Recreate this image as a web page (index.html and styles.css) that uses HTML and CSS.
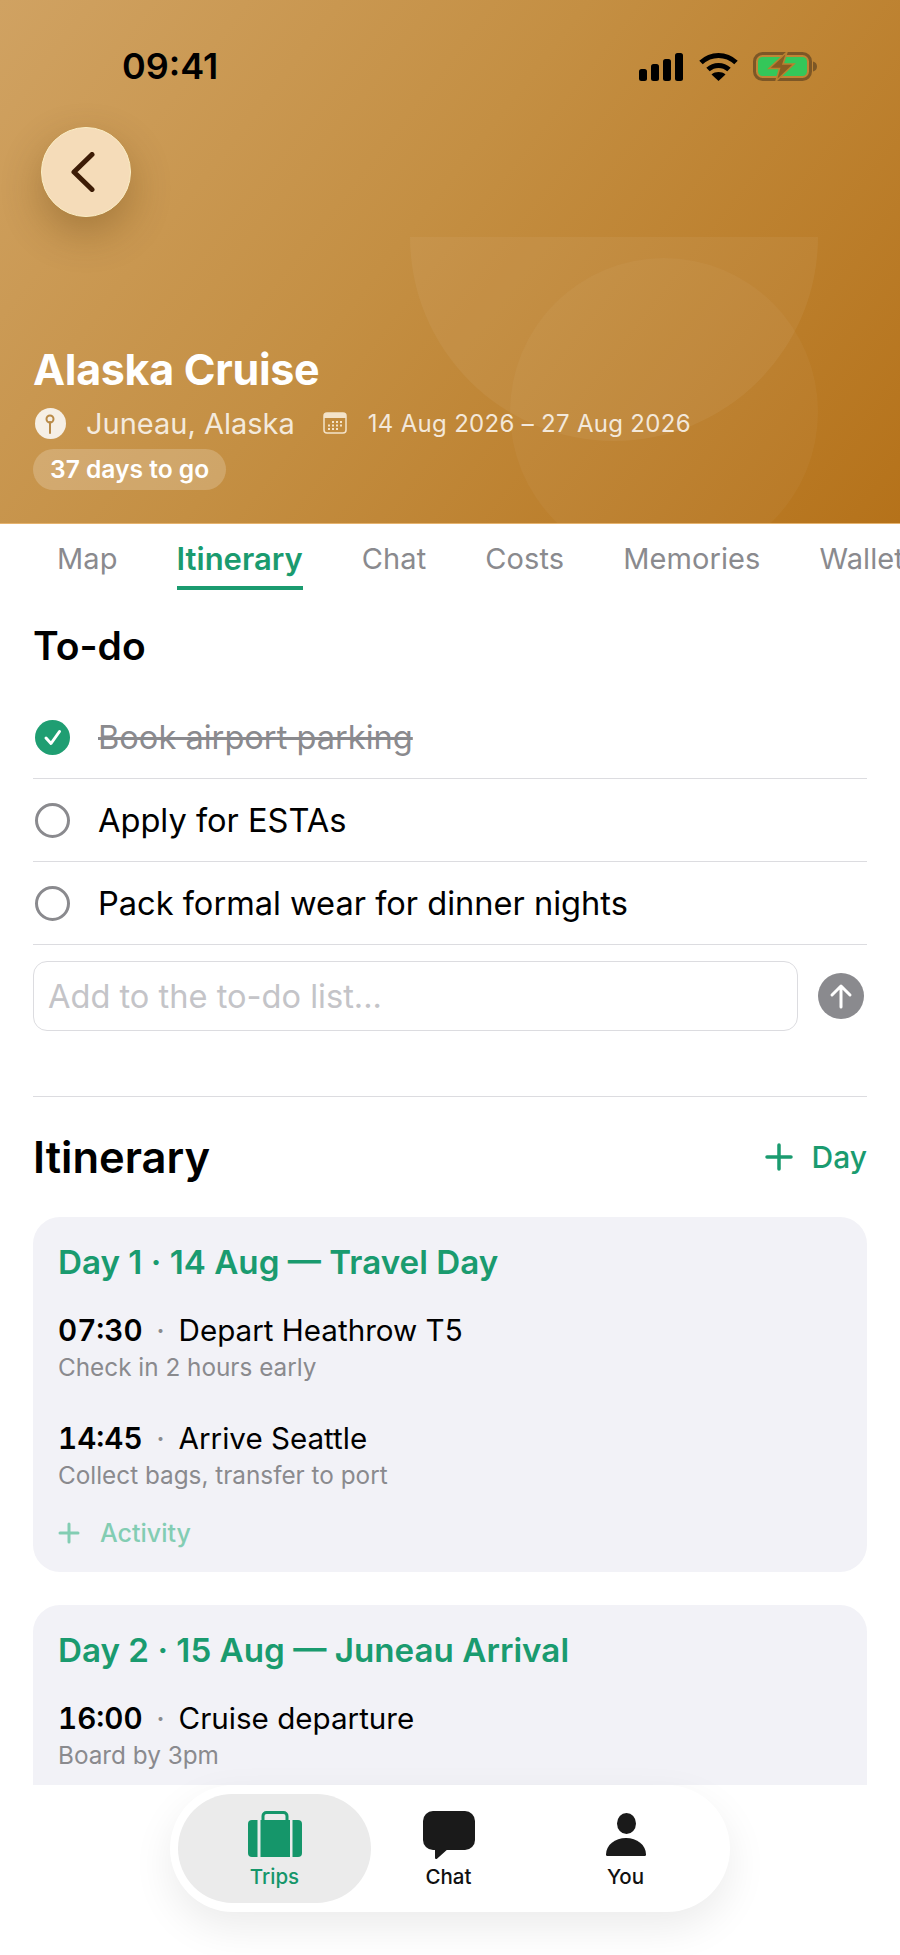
FILE: index.html
```html
<!doctype html>
<html>
  <head>
    <meta charset="utf-8">
    <title>Alaska Cruise</title>
    <link rel="stylesheet" href="styles.css">
  </head>
  <body>
    <div id="app">
      <header class="hero">
        <div class="hero-half"></div>
        <div class="hero-circle"></div>
        <div class="status">
          <span class="status-time">09:41</span>
          <div class="status-icons">
            <svg class="signal" width="44" height="28" viewBox="0 0 44 28" fill="#000">
              <rect x="0" y="16" width="8" height="12" rx="2.5"/>
              <rect x="12" y="11" width="8" height="17" rx="2.5"/>
              <rect x="24" y="6" width="8" height="22" rx="2.5"/>
              <rect x="36" y="0" width="8" height="28" rx="2.5"/>
            </svg>
            <svg width="39" height="29" viewBox="0 0 39 29" fill="none" stroke="#000" stroke-width="5">
              <path d="M2 10.5C12 1 27 1 37 10.5"/>
              <path d="M9 17.5C15 12 24 12 30 17.5"/>
              <path d="M19.5 29l-7-6.5c4-3.2 10-3.2 14 0z" fill="#000" stroke="none"/>
            </svg>
            <svg width="64" height="29" viewBox="0 0 64 29">
              <rect x="1.5" y="1.5" width="56" height="26" rx="8" fill="none" stroke="#7d5726" stroke-width="3"/>
              <rect x="5" y="5" width="49" height="19" rx="4.5" fill="#34c759"/>
              <path d="M60 9.5c2.6.6 4 2.6 4 5s-1.4 4.400-4 5z" fill="#7d5726"/>
              <path d="M34 0L16 16.500h10.500L23 29 41 12H30z" fill="#8a5c22" stroke="#b9802f" stroke-width="1.500"/>
            </svg>
          </div>
        </div>
        <button class="back">
          <svg width="24" height="40" viewBox="0 0 24 40" fill="none" stroke="#3d1c06" stroke-width="5" stroke-linecap="round" stroke-linejoin="round">
            <path d="M21 2.500L3 20l18 17.500"/>
          </svg>
        </button>
        <div class="trip">
          <h1 class="trip-title">Alaska Cruise</h1>
          <div class="trip-meta">
            <svg class="pin" width="31" height="31" viewBox="0 0 31 31">
              <circle cx="15.500" cy="15.500" r="15.500" fill="#f6efe5"/>
              <circle cx="15" cy="11" r="3.500" fill="none" stroke="#b98a47" stroke-width="2"/>
              <path d="M15 14v11" stroke="#b98a47" stroke-width="2" stroke-linecap="round"/>
            </svg>
            <span class="trip-place">Juneau, Alaska</span>
            <svg class="cal" width="24" height="22" viewBox="0 0 24 22">
              <rect x="1" y="1" width="22" height="20" rx="3" fill="none" stroke="#f4e3c9" stroke-width="1.500"/>
              <path d="M1 4a3 3 0 0 1 3-3h16a3 3 0 0 1 3 3v2H1z" fill="#f4e3c9"/>
              <g fill="#f4e3c9">
                <rect x="9" y="9" width="2" height="2"/><rect x="13" y="9" width="2" height="2"/><rect x="17" y="9" width="2" height="2"/>
                <rect x="5" y="12.500" width="2" height="2"/><rect x="9" y="12.500" width="2" height="2"/><rect x="13" y="12.500" width="2" height="2"/><rect x="17" y="12.500" width="2" height="2"/>
                <rect x="5" y="16" width="2" height="2"/><rect x="9" y="16" width="2" height="2"/><rect x="13" y="16" width="2" height="2"/>
              </g>
            </svg>
            <span class="trip-dates">14 Aug 2026 – 27 Aug 2026</span>
          </div>
          <span class="trip-count">37 days to go</span>
        </div>
      </header>

      <nav class="tabs">
        <a class="tab">Map</a>
        <a class="tab tab-on">Itinerary</a>
        <a class="tab">Chat</a>
        <a class="tab">Costs</a>
        <a class="tab">Memories</a>
        <a class="tab">Wallet</a>
      </nav>

      <section class="todo">
        <h2 class="todo-title">To-do</h2>
        <div class="todo-row">
          <svg class="tick" width="35" height="35" viewBox="0 0 35 35">
            <circle cx="17.500" cy="17.500" r="17.500" fill="#1f9e72"/>
            <path d="M11 18l5 5.500L24.500 11.500" fill="none" stroke="#fff" stroke-width="3" stroke-linecap="round" stroke-linejoin="round"/>
          </svg>
          <span class="todo-done">Book airport parking</span>
        </div>
        <div class="todo-row">
          <span class="ring"></span>
          <span>Apply for ESTAs</span>
        </div>
        <div class="todo-row">
          <span class="ring"></span>
          <span>Pack formal wear for dinner nights</span>
        </div>
        <div class="todo-add">
          <div class="todo-input">Add to the to-do list...</div>
          <button class="send">
            <svg width="24" height="26" viewBox="0 0 24 26" fill="none" stroke="#fff" stroke-width="3" stroke-linecap="round" stroke-linejoin="round">
              <path d="M12 24V3M3 12l9-9 9 9"/>
            </svg>
          </button>
        </div>
      </section>

      <section class="plan">
        <div class="plan-head">
          <h2 class="plan-title">Itinerary</h2>
          <a class="plan-add">
            <svg width="30" height="30" viewBox="0 0 30 30" stroke="#1a9b6f" stroke-width="3.500" stroke-linecap="round">
              <path d="M15 3v24M3 15h24"/>
            </svg>
            Day
          </a>
        </div>

        <article class="day">
          <h3 class="day-title">Day 1 · 14 Aug — Travel Day</h3>
          <div class="stop">
            <div class="stop-line"><b>07:30</b><i>·</i><span>Depart Heathrow T5</span></div>
            <div class="stop-note">Check in 2 hours early</div>
          </div>
          <div class="stop">
            <div class="stop-line"><b>14:45</b><i>·</i><span>Arrive Seattle</span></div>
            <div class="stop-note">Collect bags, transfer to port</div>
          </div>
          <a class="day-add">
            <svg width="22" height="22" viewBox="0 0 22 22" stroke="#83cdb3" stroke-width="3" stroke-linecap="round">
              <path d="M11 2v18M2 11h18"/>
            </svg>
            Activity
          </a>
        </article>

        <article class="day">
          <h3 class="day-title">Day 2 · 15 Aug — Juneau Arrival</h3>
          <div class="stop">
            <div class="stop-line"><b>16:00</b><i>·</i><span>Cruise departure</span></div>
            <div class="stop-note">Board by 3pm</div>
          </div>
        </article>
      </section>

      <footer class="bar">
        <div class="bar-pill">
          <a class="bar-item bar-trips">
            <svg width="54" height="48" viewBox="0 0 54 48" fill="#15966a">
              <path d="M9.500 9v37H4a4 4 0 0 1-4-4V13a4 4 0 0 1 4-4z"/>
              <rect x="12.500" y="9" width="29.500" height="37"/>
              <path d="M44.500 9v37H50a4 4 0 0 0 4-4V13a4 4 0 0 0-4-4z"/>
              <path d="M15 10V5a3.500 3.500 0 0 1 3.500-3.500h17A3.500 3.500 0 0 1 39 5v5" fill="none" stroke="#15966a" stroke-width="3"/>
            </svg>
            <span>Trips</span>
          </a>
          <a class="bar-item bar-chat">
            <svg width="52" height="48" viewBox="0 0 52 48" fill="#1a1a1a">
              <rect x="0" y="0" width="52" height="39" rx="10"/>
              <path d="M12 37v10a1.200 1.200 0 0 0 2 .8L26 37z"/>
            </svg>
            <span>Chat</span>
          </a>
          <a class="bar-item bar-you">
            <svg width="40" height="48" viewBox="0 0 40 48" fill="#1a1a1a">
              <ellipse cx="20.500" cy="12.500" rx="9.500" ry="10.500"/>
              <path d="M0 43.500C0 34 9 27 20 27S40 34 40 43.500c0 1-.8 1.500-1.700 1.500H1.700C.8 45 0 44.500 0 43.500z"/>
            </svg>
            <span>You</span>
          </a>
        </div>
      </footer>
    </div>
  </body>
</html>
```

FILE: styles.css
```css
*,*:before,*:after {
  margin: 0;
  padding: 0;
  border: 0;
  box-sizing: border-box;
}

body,
#app {
  width: 900px;
  height: 1955px;
  overflow: hidden;
  background-color: #fff;
}

#app {
  position: relative;
  font-family: Inter, "Liberation Sans", sans-serif;
  color: #000;
}

/* hero */

.hero {
  position: relative;
  height: 524px;
  display: flex;
  flex-direction: column;
  padding: 52px 33px 0;
  overflow: hidden;
  background: linear-gradient(128deg, #d0a262 0%, #c48f43 45%, #b5721a 100%);
  border-bottom: 1px solid #e6b36e;
}

.hero-half {
  position: absolute;
  left: 410px;
  top: 237px;
  width: 408px;
  height: 204px;
  border-radius: 0 0 204px 204px;
  background-color: rgba(255,255,255,0.05);
}

.hero-circle {
  position: absolute;
  left: 510px;
  top: 258px;
  width: 308px;
  height: 308px;
  border-radius: 50%;
  background-color: rgba(255,255,255,0.035);
}

.status {
  position: relative;
  display: flex;
  justify-content: space-between;
  align-items: center;
  height: 29px;
  padding: 0 50px 0 89px;
}

.status-time {
  font-size: 36px;
  font-weight: 600;
  line-height: 29px;
}

.status-icons {
  display: flex;
  align-items: center;
  gap: 15px;
}

.signal {
  margin-right: 1px;
}

.back {
  position: relative;
  display: flex;
  align-items: center;
  justify-content: center;
  width: 90px;
  height: 90px;
  margin: 46px 0 0 8px;
  padding-right: 6px;
  border-radius: 50%;
  border: 1px solid #fbeec5;
  background-color: #f5dcb9;
  box-shadow: 0 16px 40px rgba(80,50,10,0.3);
}

.trip {
  position: relative;
  margin-top: auto;
  padding-bottom: 33px;
  color: #fff;
}

.trip-title {
  font-size: 43px;
  font-weight: 700;
  line-height: 52px;
  letter-spacing: -0.3px;
}

.trip-meta {
  display: flex;
  align-items: center;
  margin-top: 11px;
  height: 34px;
  color: rgba(255,255,255,0.82);
}

.pin {
  margin: 0 20px 0 2px;
}

.trip-place {
  font-size: 29px;
}

.cal {
  margin: 0 21px 0 28px;
}

.trip-dates {
  font-size: 24px;
  letter-spacing: 0.3px;
}

.trip-count {
  display: inline-block;
  margin-top: 9px;
  padding: 0 17px;
  font-size: 24.6px;
  font-weight: 600;
  line-height: 41px;
  border-radius: 21px;
  background-color: rgba(255,255,255,0.2);
}

/* tabs */

.tabs {
  display: flex;
  gap: 59px;
  height: 66px;
  padding-left: 57px;
  overflow: hidden;
  white-space: nowrap;
}

.tab {
  height: 66px;
  font-size: 29px;
  line-height: 70px;
  letter-spacing: 0.1px;
  color: #8a8a8e;
}

.tab-on {
  font-size: 31px;
  font-weight: 600;
  letter-spacing: 0;
  color: #1a9b6f;
  border-bottom: 4px solid #1a9b6f;
}

/* to-do */

.todo {
  padding: 0 33px 0 33px;
}

.todo-title {
  margin-top: 33px;
  font-size: 39px;
  font-weight: 600;
  line-height: 46px;
}

.todo-row {
  display: flex;
  align-items: center;
  gap: 28px;
  height: 83px;
  padding-left: 2px;
  font-size: 32.6px;
  border-bottom: 1px solid #dcdce0;
}

.todo-title + .todo-row {
  height: 110px;
  padding-top: 27px;
}

.todo-done {
  color: #8a8a8e;
  text-decoration: line-through;
}

.ring {
  width: 35px;
  height: 35px;
  border-radius: 50%;
  border: 3px solid #8a8a8e;
}

.todo-add {
  display: flex;
  align-items: center;
  gap: 20px;
  margin-top: 16px;
  padding-bottom: 65px;
  border-bottom: 1px solid #dcdce0;
}

.todo-input {
  width: 765px;
  height: 70px;
  padding-left: 14px;
  font-size: 32.6px;
  line-height: 68px;
  color: #c4c4c8;
  border: 1px solid #dcdce0;
  border-radius: 14px;
}

.send {
  display: flex;
  align-items: center;
  justify-content: center;
  width: 46px;
  height: 46px;
  border-radius: 50%;
  background-color: #8a8a8e;
}

/* itinerary */

.plan {
  padding: 0 33px;
}

.plan-head {
  display: flex;
  justify-content: space-between;
  align-items: center;
  height: 120px;
}

.plan-title {
  font-size: 43.5px;
  font-weight: 600;
}

.plan-add {
  display: flex;
  align-items: center;
  gap: 18px;
  font-size: 30px;
  font-weight: 500;
  color: #1a9b6f;
}

.day {
  height: 355px;
  margin-bottom: 33px;
  padding: 23px 25px 0;
  border-radius: 27px;
  background-color: #f2f2f7;
}

.day-title {
  font-size: 33.2px;
  font-weight: 600;
  line-height: 44px;
  color: #1a9b6f;
}

.stop {
  margin-top: 28px;
}

.stop + .stop {
  margin-top: 38px;
}

.stop-line {
  display: flex;
  align-items: center;
  font-size: 29.6px;
  line-height: 36px;
}

.stop-line b {
  font-weight: 600;
  font-variant-numeric: tabular-nums;
}

.stop-line i {
  width: 36px;
  font-style: normal;
  text-align: center;
  color: #8a8a8e;
}

.stop-note {
  margin-top: 4px;
  font-size: 24.3px;
  line-height: 30px;
  color: #8a8a8e;
}

.day-add {
  display: flex;
  align-items: center;
  gap: 20px;
  margin-top: 28px;
  font-size: 25px;
  font-weight: 500;
  line-height: 30px;
  color: #83cdb3;
}

/* bottom bar */

.bar {
  position: absolute;
  left: 0;
  right: 0;
  bottom: 0;
  height: 170px;
  background-color: #fff;
}

.bar-pill {
  display: flex;
  width: 560px;
  height: 127px;
  margin-left: 170px;
  padding: 9px 8px;
  border-radius: 64px;
  background-color: #fff;
  box-shadow: 0 16px 40px rgba(0,0,0,0.08);
}

.bar-item {
  display: flex;
  flex-direction: column;
  align-items: center;
  height: 109px;
  padding-top: 17px;
  gap: 6px;
  font-size: 20.5px;
  font-weight: 500;
  line-height: 24px;
  color: #111;
}

.bar-trips {
  flex: 0 0 193px;
  border-radius: 55px;
  background-color: #ebebeb;
  color: #15966a;
}

.bar-chat {
  flex: 0 0 155px;
}

.bar-you {
  flex: 0 0 199px;
}
```
